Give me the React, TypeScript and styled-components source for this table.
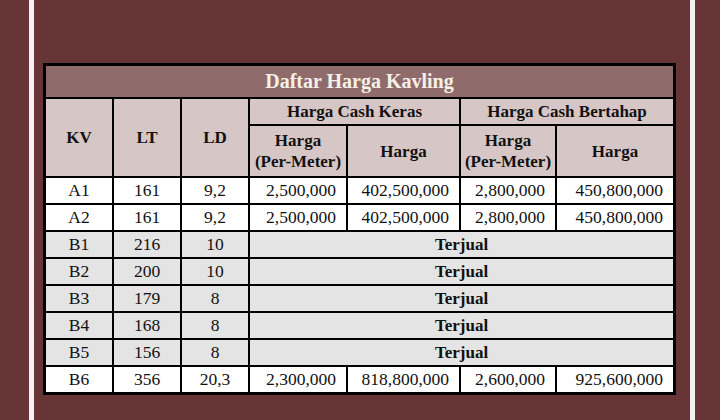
import React from 'react';
import styled, { createGlobalStyle } from 'styled-components';

type Row = {
  kv: string;
  lt: string;
  ld: string;
  prices?: [string, string, string, string];
};

const rows: Row[] = [
  { kv: 'A1', lt: '161', ld: '9,2', prices: ['2,500,000', '402,500,000', '2,800,000', '450,800,000'] },
  { kv: 'A2', lt: '161', ld: '9,2', prices: ['2,500,000', '402,500,000', '2,800,000', '450,800,000'] },
  { kv: 'B1', lt: '216', ld: '10' },
  { kv: 'B2', lt: '200', ld: '10' },
  { kv: 'B3', lt: '179', ld: '8' },
  { kv: 'B4', lt: '168', ld: '8' },
  { kv: 'B5', lt: '156', ld: '8' },
  { kv: 'B6', lt: '356', ld: '20,3', prices: ['2,300,000', '818,800,000', '2,600,000', '925,600,000'] },
];

const GlobalStyle = createGlobalStyle`
  html, body {
    margin: 0;
    padding: 0;
    background: #673536;
  }
`;

const Frame = styled.div`
  display: flex;
  height: 420px;
  padding-left: 29px;
  overflow: hidden;
`;

const Stripe = styled.div`
  width: 5px;
  height: 100%;
  background: #f5f1f1;
`;

const Content = styled.div`
  width: 656px;
  padding: 63px 0 0 9px;
  box-sizing: border-box;
`;

const Grid = styled.div`
  display: grid;
  grid-template-columns: 66px 66px 66px 96px 111px 94px 116px;
  grid-template-rows: 31px 25px 50px repeat(8, 25px);
  gap: 2px;
  padding: 3px;
  width: 633px;
  box-sizing: border-box;
  background: #000;
  font-family: "Liberation Serif", "Times New Roman", serif;
`;

type Tone = 'title' | 'head' | 'white' | 'gray';

const tones: Record<Tone, string> = {
  title: '#8f6c6b',
  head: '#d7c6c6',
  white: '#ffffff',
  gray: '#e4e4e4',
};

const Cell = styled.div<{ $tone: Tone; $right?: boolean; $bold?: boolean }>`
  display: flex;
  align-items: center;
  justify-content: ${(p) => (p.$right ? 'flex-end' : 'center')};
  padding-right: ${(p) => (p.$right ? '10px' : '0')};
  background: ${(p) => tones[p.$tone]};
  color: #111;
  font-size: 17.5px;
  font-weight: ${(p) => (p.$bold ? 700 : 400)};
  text-align: center;
  line-height: 21px;
  white-space: nowrap;
`;

const Title = styled(Cell)`
  grid-column: 1 / -1;
  color: #f7f0e7;
  font-size: 20px;
  font-weight: 700;
`;

const RowHead = styled(Cell)`
  grid-row: span 2;
  font-size: 17px;
`;

const GroupHead = styled(Cell)`
  grid-column: span 2;
  font-size: 17px;
`;

const SubHead = styled(Cell)`
  font-size: 17px;
  flex-direction: column;
`;

const Sold = styled(Cell)`
  grid-column: 4 / span 4;
  font-size: 17px;
`;

export default function App() {
  return (
    <>
      <GlobalStyle />
      <Frame>
        <Stripe />
        <Content>
          <Grid>
            <Title $tone="title">Daftar Harga Kavling</Title>
            <RowHead $tone="head" $bold>KV</RowHead>
            <RowHead $tone="head" $bold>LT</RowHead>
            <RowHead $tone="head" $bold>LD</RowHead>
            <GroupHead $tone="head" $bold>Harga Cash Keras</GroupHead>
            <GroupHead $tone="head" $bold>Harga Cash Bertahap</GroupHead>
            <SubHead $tone="head" $bold>
              <span>Harga</span>
              <span>(Per-Meter)</span>
            </SubHead>
            <SubHead $tone="head" $bold>Harga</SubHead>
            <SubHead $tone="head" $bold>
              <span>Harga</span>
              <span>(Per-Meter)</span>
            </SubHead>
            <SubHead $tone="head" $bold>Harga</SubHead>
            {rows.map((r) => {
              const tone: Tone = r.prices ? 'white' : 'gray';
              return (
                <React.Fragment key={r.kv}>
                  <Cell $tone={tone}>{r.kv}</Cell>
                  <Cell $tone={tone}>{r.lt}</Cell>
                  <Cell $tone={tone}>{r.ld}</Cell>
                  {r.prices ? (
                    r.prices.map((p, i) => (
                      <Cell key={i} $tone={tone} $right>
                        {p}
                      </Cell>
                    ))
                  ) : (
                    <Sold $tone={tone} $bold>Terjual</Sold>
                  )}
                </React.Fragment>
              );
            })}
          </Grid>
        </Content>
        <Stripe />
      </Frame>
    </>
  );
}
